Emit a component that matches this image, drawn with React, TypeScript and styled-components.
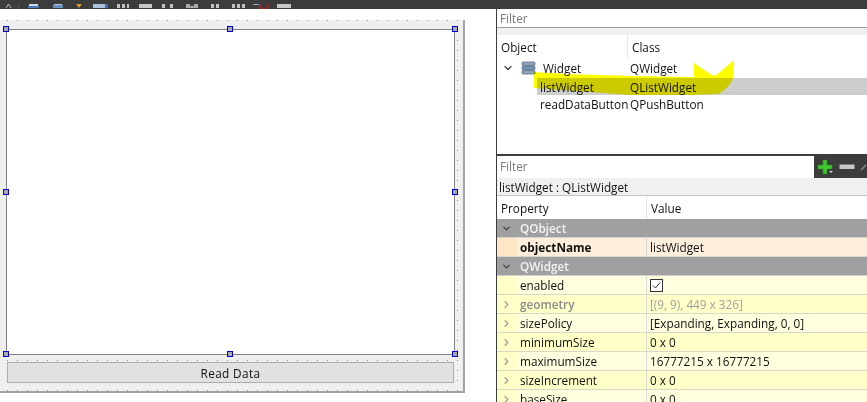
import { createGlobalStyle, styled } from "styled-components";
import { ChevronDown, ChevronRight } from "lucide-react";

const GlobalStyle = createGlobalStyle`
  html, body {
    margin: 0;
    padding: 0;
    background: #fff;
    overflow: hidden;
  }
  body {
    font-family: "Open Sans", "Liberation Sans", sans-serif;
    font-size: 11.75px;
    color: #111;
  }
`;

const Page = styled.div`
  width: 867px;
  height: 402px;
  display: flex;
  flex-direction: column;
  overflow: hidden;
  position: relative;
`;

const Toolbar = styled.div`
  height: 9px;
  flex: none;
  background: #3c3c3c;
  overflow: hidden;
`;

const Main = styled.div`
  flex: 1;
  min-height: 0;
  display: flex;
`;

const DesignerPane = styled.div`
  width: 496px;
  flex: none;
  padding-top: 11px;
  background: #fff;
`;

const FormCanvas = styled.div`
  width: 465px;
  height: 373px;
  box-sizing: border-box;
  padding: 9px 1px 0 6px;
  border-right: 2px solid #a3a3a3;
  border-bottom: 2px solid #a3a3a3;
  background-color: #efefef;
  background-image: radial-gradient(circle at 0.5px 0.5px, #8f8f8f 0.7px, transparent 0.8px);
  background-size: 10px 10px;
  background-position: 7px 0;
`;

const ListBox = styled.div`
  position: relative;
  width: 449px;
  height: 326px;
  box-sizing: border-box;
  background: #fff;
  border: 1px solid #82828c;
`;

const Handle = styled.span<{ $x: "start" | "mid" | "end"; $y: "start" | "mid" | "end" }>`
  position: absolute;
  width: 4px;
  height: 4px;
  background: #a9a9a9;
  border: 1px solid #0000d8;
  left: ${(p) => (p.$x === "start" ? "-4px" : p.$x === "mid" ? "220px" : "445px")};
  top: ${(p) => (p.$y === "start" ? "-4px" : p.$y === "mid" ? "159px" : "321px")};
`;

const ReadButton = styled.div`
  width: 447px;
  height: 21px;
  box-sizing: border-box;
  margin: 7px 0 0 1px;
  display: flex;
  align-items: center;
  justify-content: center;
  background: #e1e1e1;
  border: 1px solid #adadad;
  color: #111;
  letter-spacing: 0.4px;
`;

const SidePane = styled.div`
  flex: 1;
  min-width: 0;
  display: flex;
  flex-direction: column;
  border-left: 1px solid #3c3c3c;
  background: #fff;
`;

const ObjectPanel = styled.div`
  height: 145px;
  flex: none;
  background: #fff;
`;

const FilterInput = styled.div<{ $width?: string }>`
  height: 19px;
  box-sizing: border-box;
  width: ${(p) => p.$width ?? "100%"};
  padding-left: 3px;
  display: flex;
  align-items: center;
  color: #7a7a7a;
  background: #fff;
  border-bottom: 1px solid #9a9a9a;
`;

const TreeHeader = styled.div`
  margin-top: 7px;
  height: 23px;
  display: grid;
  grid-template-columns: 130px 1fr;
  align-items: center;
  background: #fff;
  box-shadow: 0 -7px 0 #f0f0f0;
`;

const HeaderCell = styled.div`
  height: 100%;
  display: flex;
  align-items: center;
  padding-left: 4px;
  & + & {
    border-left: 1px solid #e6e6e6;
  }
`;

const ClassCell = styled.div`
  padding-left: 3px;
`;

const TreeRow = styled.div<{ $selected?: boolean; $indent: number }>`
  height: 17px;
  display: grid;
  grid-template-columns: ${(p) => 130 - p.$indent}px 1fr;
  align-items: center;
  margin-left: ${(p) => p.$indent}px;
  background: ${(p) => (p.$selected ? "#cdcdcd" : "transparent")};
`;

const TreeName = styled.div`
  display: flex;
  align-items: center;
  padding-left: 3px;
  white-space: nowrap;
`;

const RootRow = styled.div`
  height: 20px;
  display: grid;
  grid-template-columns: 130px 1fr;
  align-items: center;
`;

const RootName = styled.div`
  display: flex;
  align-items: center;
  padding-left: 5px;
  gap: 7px;
`;

const Highlight = styled.svg`
  position: absolute;
  left: 0;
  top: 0;
  pointer-events: none;
  mix-blend-mode: multiply;
`;

const PropFilterBar = styled.div`
  height: 24px;
  flex: none;
  display: flex;
  align-items: center;
  background: #3c3c3c;
  border-top: 2px solid #3c3c3c;
  box-sizing: border-box;
`;

const PropFilter = styled(FilterInput)`
  height: 22px;
  padding-bottom: 2px;
  border-bottom: none;
`;

const BarIcons = styled.div`
  display: flex;
  align-items: center;
  gap: 5px;
  padding-left: 3px;
`;

const SelectionLabel = styled.div`
  height: 17px;
  flex: none;
  display: flex;
  align-items: center;
  padding-left: 2px;
  background: #f0f0f0;
  border-bottom: 1px solid #c4c4c4;
`;

const PropHeader = styled.div`
  height: 23px;
  flex: none;
  display: grid;
  grid-template-columns: 149px 1fr;
  align-items: center;
  background: #fff;
`;

const GroupRow = styled.div`
  height: 19px;
  flex: none;
  box-sizing: border-box;
  padding-left: 4px;
  display: flex;
  align-items: center;
  gap: 8px;
  background: #a0a0a0;
  color: #f2f2f2;
  font-weight: 600;
  border-bottom: 1px solid #d2d2d2;
`;

const PropRow = styled.div<{ $bg: string; $alt: string }>`
  height: 19px;
  flex: none;
  box-sizing: border-box;
  display: grid;
  grid-template-columns: 20px 129px 1fr;
  align-items: center;
  background: ${(p) => p.$alt};
  border-bottom: 1px solid #d8d8c8;
  & > div:first-child {
    background: ${(p) => p.$bg};
  }
`;

const Gutter = styled.div`
  height: 100%;
  display: flex;
  align-items: center;
  justify-content: center;
  padding-right: 2px;
  box-sizing: border-box;
  color: #a0a0a0;
`;

const PropName = styled.div<{ $bold?: boolean; $muted?: boolean }>`
  padding-left: 3px;
  font-weight: ${(p) => (p.$bold ? 700 : p.$muted ? 600 : 400)};
  color: ${(p) => (p.$muted ? "#8a8a8a" : "#111")};
`;

const PropValue = styled.div<{ $muted?: boolean }>`
  height: 100%;
  display: flex;
  align-items: center;
  padding-left: 3px;
  border-left: 1px solid #d8d8d8;
  color: ${(p) => (p.$muted ? "#a0a0a0" : "#111")};
`;

const Checkbox = styled.span`
  width: 11px;
  height: 11px;
  border: 1px solid #333;
  background: #fff;
  display: flex;
  align-items: center;
  justify-content: center;
`;

const handles: ["start" | "mid" | "end", "start" | "mid" | "end"][] = [
  ["start", "start"], ["mid", "start"], ["end", "start"],
  ["start", "mid"], ["end", "mid"],
  ["start", "end"], ["mid", "end"], ["end", "end"],
];

const COL_A = "#ffffc8";
const COL_B = "#ffffe0";

const properties = [
  { name: "enabled", check: true },
  { name: "geometry", value: "[(9, 9), 449 x 326]", muted: true, arrow: true },
  { name: "sizePolicy", value: "[Expanding, Expanding, 0, 0]", arrow: true },
  { name: "minimumSize", value: "0 x 0", arrow: true },
  { name: "maximumSize", value: "16777215 x 16777215", arrow: true },
  { name: "sizeIncrement", value: "0 x 0", arrow: true },
  { name: "baseSize", value: "0 x 0", arrow: true },
];

function ToolbarIcons() {
  return (
    <svg width="300" height="9" viewBox="0 0 300 9">
      <g transform="translate(0 -3)" opacity="0.9">
        <path d="M6 7 L8.5 3 L11 7" stroke="#ccc" strokeWidth="1" fill="none" />
        <rect x="18" y="0" width="1" height="12" fill="#5a5a5a" />
        <rect x="29" y="0" width="9" height="5" fill="#dce8fa" />
        <rect x="28" y="5" width="11" height="2" fill="#4d7fc4" />
        <rect x="54" y="0" width="8" height="4" fill="#c4d8f2" />
        <rect x="53" y="4" width="10" height="3" fill="#6f9ad2" />
        <path d="M74 0 H84 L79 7 Z" fill="#f0a040" />
        <rect x="93" y="2" width="12" height="5" fill="#b8d0ee" />
        <rect x="105" y="0" width="3" height="7" fill="#3a78d0" />
        <path d="M117 0h3v7h-3zM122 1h3v6h-3zM127 0h2v7h-2z" fill="#d0d0d0" />
        <rect x="139" y="3" width="13" height="4" fill="#d8d8d8" />
        <path d="M162 0h3v7h-3zM170 0h3v7h-3zM165 1h5v2h-5z" fill="#cfcfcf" />
        <path d="M186 1h12v6h-12z" fill="#b8b8b8" />
        <path d="M190 3h4v2h-4z" fill="#444" />
        <path d="M211 0h3v7h-3zM216 2h3v5h-3z" fill="#d0d0d0" />
        <path d="M232 0h3v7h-3zM237 2h3v5h-3zM242 0h3v7h-3z" fill="#d0d0d0" />
        <circle cx="264" cy="4" r="4" fill="none" stroke="#b02020" strokeWidth="2" />
        <rect x="253" y="0" width="6" height="4" fill="#9ab8e0" />
        <rect x="277" y="3" width="14" height="4" fill="#d8d8d8" />
      </g>
    </svg>
  );
}

function App() {
  return (
    <Page>
      <GlobalStyle />
      <Toolbar>
        <ToolbarIcons />
      </Toolbar>
      <Main>
        <DesignerPane>
          <FormCanvas>
            <ListBox>
              {handles.map(([x, y]) => (
                <Handle key={x + y} $x={x} $y={y} />
              ))}
            </ListBox>
            <ReadButton>Read Data</ReadButton>
          </FormCanvas>
        </DesignerPane>
        <SidePane>
          <ObjectPanel>
            <FilterInput>Filter</FilterInput>
            <TreeHeader>
              <HeaderCell>Object</HeaderCell>
              <HeaderCell>Class</HeaderCell>
            </TreeHeader>
            <RootRow>
              <RootName>
                <ChevronDown size={12} color="#444" strokeWidth={2.5} />
                <svg width="15" height="14" viewBox="0 0 15 14">
                  <rect x="1" y="1" width="13" height="3.4" rx="1" fill="#8fa5bd" stroke="#5b6b7d" strokeWidth="0.8" />
                  <rect x="1" y="5.3" width="13" height="3.4" rx="1" fill="#6f93ba" stroke="#5b6b7d" strokeWidth="0.8" />
                  <rect x="1" y="9.6" width="13" height="3.4" rx="1" fill="#8fa5bd" stroke="#5b6b7d" strokeWidth="0.8" />
                </svg>
                Widget
              </RootName>
              <ClassCell>QWidget</ClassCell>
            </RootRow>
            <TreeRow $indent={40} $selected>
              <TreeName>listWidget</TreeName>
              <ClassCell>QListWidget</ClassCell>
            </TreeRow>
            <TreeRow $indent={40}>
              <TreeName>readDataButton</TreeName>
              <ClassCell>QPushButton</ClassCell>
            </TreeRow>
          </ObjectPanel>
          <PropFilterBar>
            <PropFilter $width="317px">Filter</PropFilter>
            <BarIcons>
              <svg width="17" height="16" viewBox="0 0 17 16">
                <path d="M6 1h4v5h5v4h-5v5H6v-5H1V6h5z" fill="#3fc92f" stroke="#1f8a1a" strokeWidth="0.6" />
                <path d="M12 12h4l-2 2z" fill="#ddd" />
              </svg>
              <svg width="16" height="6" viewBox="0 0 16 6">
                <rect x="0.5" y="0.5" width="15" height="4.5" fill="#c8c8c8" />
              </svg>
              <svg width="7" height="8" viewBox="0 0 7 8">
                <path d="M1 7L6 2" stroke="#888" strokeWidth="1.6" />
              </svg>
            </BarIcons>
          </PropFilterBar>
          <SelectionLabel>listWidget : QListWidget</SelectionLabel>
          <PropHeader>
            <HeaderCell>Property</HeaderCell>
            <HeaderCell>Value</HeaderCell>
          </PropHeader>
          <GroupRow>
            <ChevronDown size={11} strokeWidth={3} color="#444" />
            QObject
          </GroupRow>
          <PropRow $bg="#ffe6c4" $alt="#feefdc">
            <Gutter />
            <PropName $bold>objectName</PropName>
            <PropValue>listWidget</PropValue>
          </PropRow>
          <GroupRow>
            <ChevronDown size={11} strokeWidth={3} color="#444" />
            QWidget
          </GroupRow>
          {properties.map((p, i) => (
            <PropRow key={p.name} $bg={COL_A} $alt={i % 2 === 0 ? COL_B : COL_A}>
              <Gutter>{p.arrow && <ChevronRight size={11} strokeWidth={3} />}</Gutter>
              <PropName $muted={p.muted}>{p.name}</PropName>
              <PropValue $muted={p.muted}>
                {p.check ? (
                  <Checkbox>
                    <svg width="9" height="9" viewBox="0 0 9 9">
                      <path d="M1 4.5L3.5 7L8 1.5" stroke="#333" strokeWidth="1" fill="none" />
                    </svg>
                  </Checkbox>
                ) : (
                  p.value
                )}
              </PropValue>
            </PropRow>
          ))}
        </SidePane>
      </Main>
      <Highlight width="867" height="402" viewBox="0 0 867 402">
        <path
          d="M534 72 C560 74 600 75 630 76 L694 77 L694 63 L704 70 L714 76 C720 73 728 65 734 60 L733 78 C731 84 726 90 718 94 L690 95 L630 95 L590 92 L534 88 Z"
          fill="#fdfd00"
        />
      </Highlight>
    </Page>
  );
}

export default App;
